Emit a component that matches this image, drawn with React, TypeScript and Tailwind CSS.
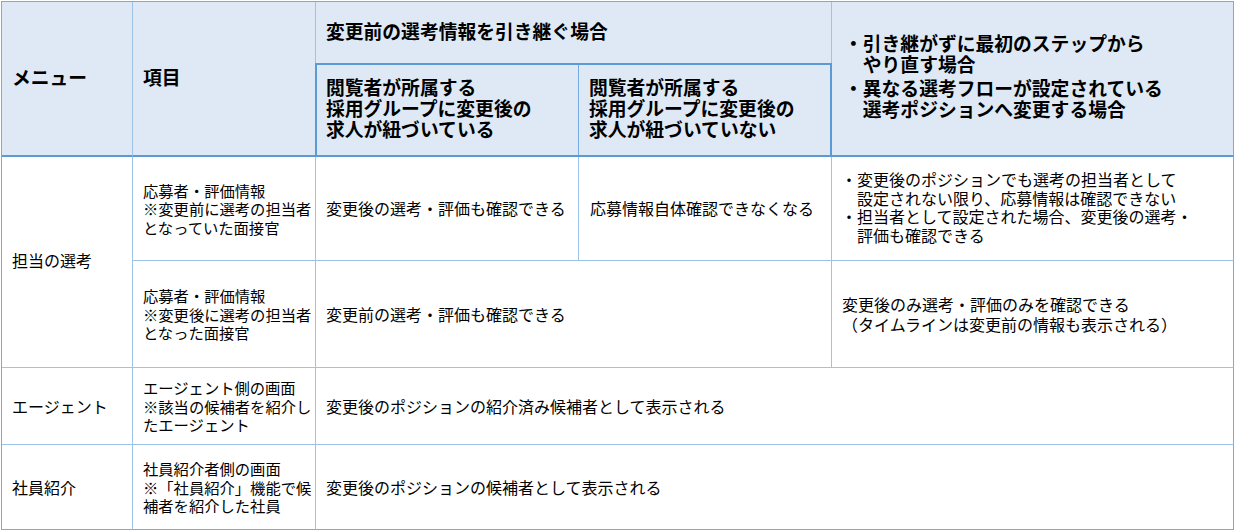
const rows = {
  font: "font-['Noto_Sans_CJK_JP','Noto_Sans_CJK_SC',sans-serif]",
};

function Lines({ lines }: { lines: string[] }) {
  return (
    <div className="flex flex-col">
      {lines.map((l) => (
        <span key={l} className="block whitespace-nowrap">
          {l}
        </span>
      ))}
    </div>
  );
}

function Bullets({ items, bulletClass, gap }: { items: string[][]; bulletClass: string; gap: string }) {
  return (
    <div className={`flex flex-col ${gap}`}>
      {items.map((item, i) => (
        <div key={i} className="flex">
          <span className={bulletClass}>・</span>
          <Lines lines={item} />
        </div>
      ))}
    </div>
  );
}

export default function App() {
  return (
    <div className={`min-h-screen bg-white pl-px pt-px text-black ${rows.font}`}>
      <div className="grid w-fit grid-cols-[131px_183px_263px_253px_402px] grid-rows-[62px_93px_104px_107px_77px_85px] border-l border-t border-[#78ace0] text-[16px] leading-[18.5px]">
        {/* header */}
        <div className="row-span-2 flex items-center border-r border-b-2 border-r-[#9dc3e6] border-b-[#5b9bd5] bg-[#dee9f5] pb-[3px] pl-[10px] text-[18.8px] font-bold">
          メニュー
        </div>
        <div className="row-span-2 flex items-center border-r border-b-2 border-r-[#9dc3e6] border-b-[#5b9bd5] bg-[#dee9f5] pb-[3px] pl-[10px] text-[18.8px] font-bold">
          項目
        </div>
        <div className="col-span-2 row-span-2 flex flex-col bg-[#dee9f5] text-[18.8px] font-bold leading-[21px]">
          <div className="flex h-[61px] items-center border-r border-[#9dc3e6] pb-[5px] pl-[10px]">
            変更前の選考情報を引き継ぐ場合
          </div>
          <div className="-ml-px flex flex-1 border-2 border-[#5b9bd5]">
            <div className="flex w-[262px] items-center border-r border-[#78ace0] pb-[5px] pl-[9px]">
              <Lines lines={['閲覧者が所属する', '採用グループに変更後の', '求人が紐づいている']} />
            </div>
            <div className="flex flex-1 items-center pb-[5px] pl-[10px]">
              <Lines lines={['閲覧者が所属する', '採用グループに変更後の', '求人が紐づいていない']} />
            </div>
          </div>
        </div>
        <div className="row-span-2 flex items-center border-r border-b-2 border-r-[#78ace0] border-b-[#5b9bd5] bg-[#dee9f5] pb-[7px] pl-[12px] text-[18.8px] font-bold leading-[21px]">
          <Bullets
            gap="gap-[3px]"
            bulletClass="w-[18.8px] shrink-0"
            items={[
              ['引き継がずに最初のステップから', 'やり直す場合'],
              ['異なる選考フローが設定されている', '選考ポジションへ変更する場合'],
            ]}
          />
        </div>

        {/* 担当の選考 */}
        <div className="row-span-2 flex items-center border-r border-b border-[#9dc3e6] pb-[4px] pl-[10px]">担当の選考</div>
        <div className="flex items-center border-r border-b border-[#9dc3e6] pl-[10px] text-[15.3px]">
          <Lines lines={['応募者・評価情報', '※変更前に選考の担当者', 'となっていた面接官']} />
        </div>
        <div className="flex items-center border-r border-b border-[#9dc3e6] pl-[10px]">変更後の選考・評価も確認できる</div>
        <div className="flex items-center border-r border-b border-[#9dc3e6] pl-[11px]">応募情報自体確認できなくなる</div>
        <div className="flex items-center border-r border-b border-[#9dc3e6] border-r-[#78ace0] pb-[3px] pl-[9px]">
          <Bullets
            gap="gap-0"
            bulletClass="w-[16px] shrink-0"
            items={[
              ['変更後のポジションでも選考の担当者として', '設定されない限り、応募情報は確認できない'],
              ['担当者として設定された場合、変更後の選考・', '評価も確認できる'],
            ]}
          />
        </div>

        <div className="flex items-center border-r border-b border-[#9dc3e6] pl-[10px] text-[15.3px]">
          <Lines lines={['応募者・評価情報', '※変更後に選考の担当者', 'となった面接官']} />
        </div>
        <div className="col-span-2 flex items-center border-r border-b border-[#9dc3e6] pl-[10px]">変更前の選考・評価も確認できる</div>
        <div className="flex items-center border-r border-b border-[#9dc3e6] border-r-[#78ace0] pl-[10px] leading-[20px]">
          <Lines lines={['変更後のみ選考・評価のみを確認できる', '（タイムラインは変更前の情報も表示される）']} />
        </div>

        {/* エージェント */}
        <div className="flex items-center border-r border-b border-[#9dc3e6] pl-[10px]">エージェント</div>
        <div className="flex items-center border-r border-b border-[#9dc3e6] pl-[10px] text-[15.3px]">
          <Lines lines={['エージェント側の画面', '※該当の候補者を紹介し', 'たエージェント']} />
        </div>
        <div className="col-span-3 flex items-center border-r border-b border-[#9dc3e6] border-r-[#78ace0] pl-[10px]">
          変更後のポジションの紹介済み候補者として表示される
        </div>

        {/* 社員紹介 */}
        <div className="flex items-center border-r border-b border-[#9dc3e6] border-b-[#78ace0] pl-[10px]">社員紹介</div>
        <div className="flex items-center border-r border-b border-[#9dc3e6] border-b-[#78ace0] pl-[10px] text-[15.3px]">
          <Lines lines={['社員紹介者側の画面', '※「社員紹介」機能で候', '補者を紹介した社員']} />
        </div>
        <div className="col-span-3 flex items-center border-r border-b border-[#78ace0] pl-[10px]">
          変更後のポジションの候補者として表示される
        </div>
      </div>
    </div>
  );
}
